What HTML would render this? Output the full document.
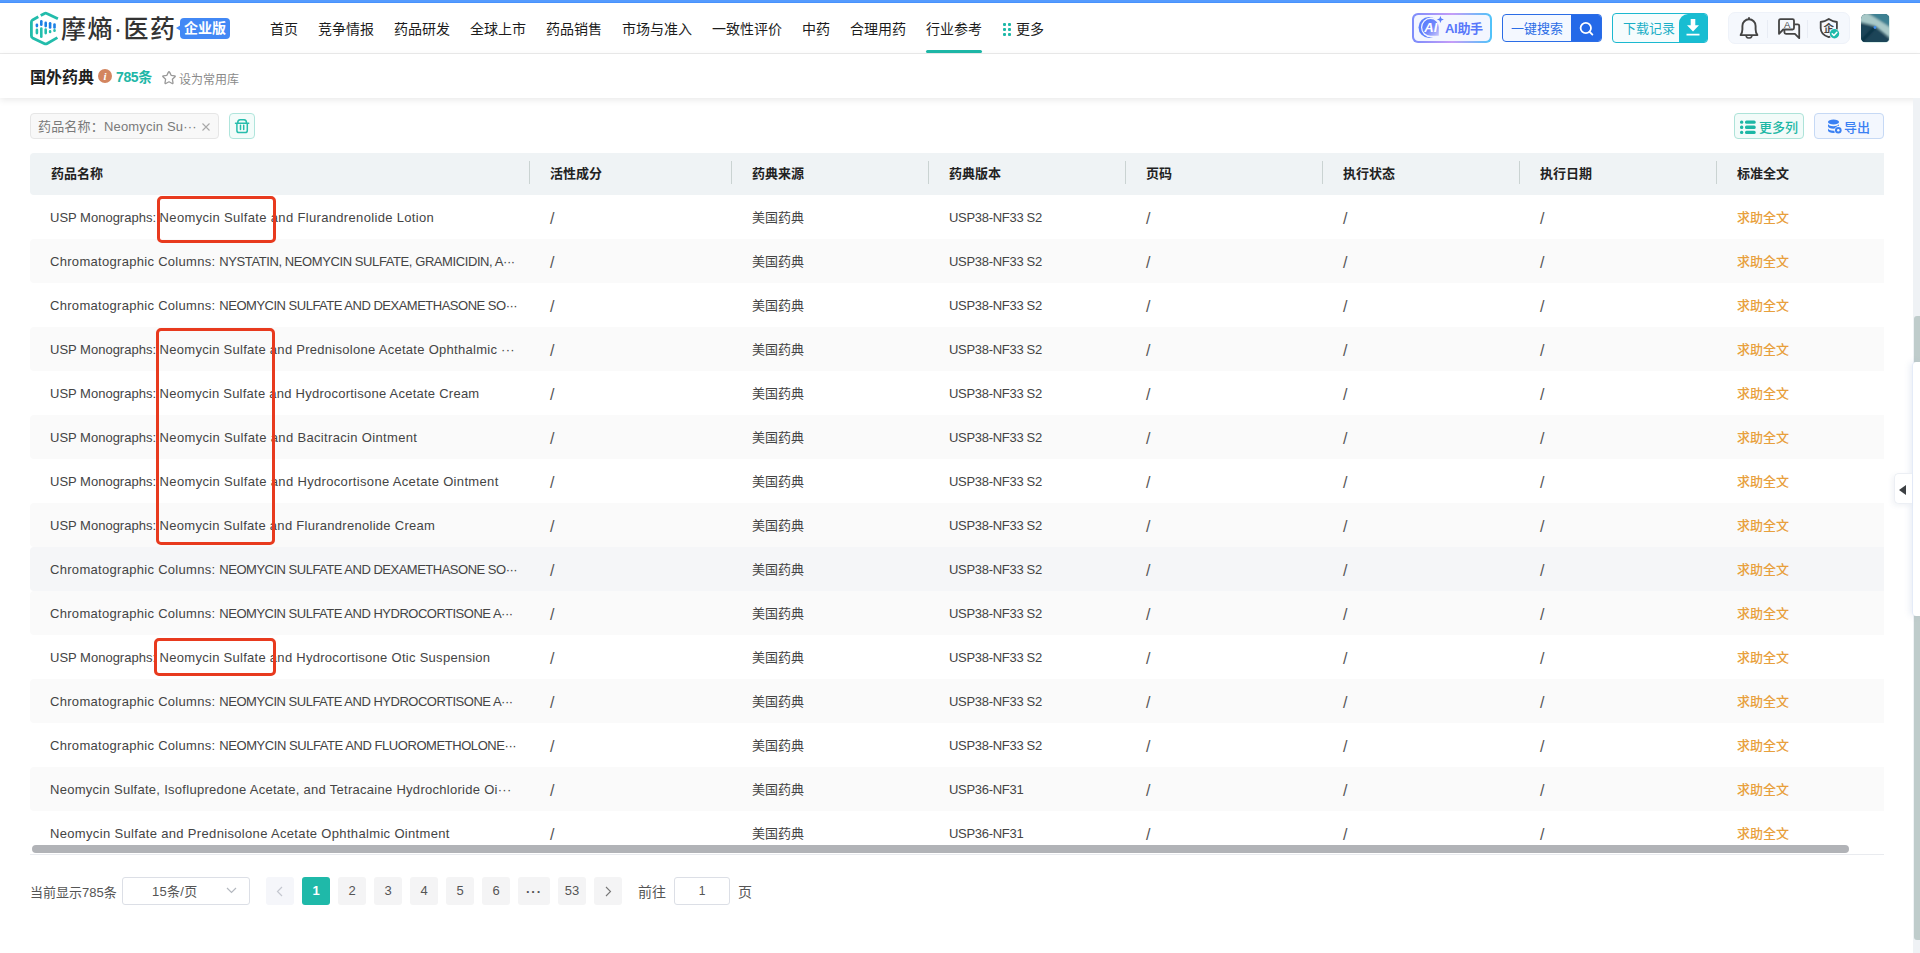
<!DOCTYPE html>
<html lang="zh-CN">
<head>
<meta charset="utf-8">
<title>国外药典 - 摩熵医药</title>
<style>
*{box-sizing:border-box;margin:0;padding:0}
html,body{width:1920px;height:953px;overflow:hidden;background:#fff}
body{position:relative;font-family:"Liberation Sans","Noto Sans CJK SC",sans-serif;font-size:13px;color:#444;-webkit-font-smoothing:antialiased}
.abs{position:absolute}
.topbar{position:absolute;left:0;top:0;width:1920px;height:3px;background:linear-gradient(#559bfe 0,#559bfe 2px,#4892fd 2px)}
/* header */
.hdr{position:absolute;left:0;top:3px;width:1920px;height:51px;background:#fff;border-bottom:1px solid #ececec}
.logo-ic{position:absolute;left:29px;top:8px;width:31px;height:36px}
.logo-tx{position:absolute;left:61px;top:8px;height:36px;line-height:36px;font-size:25px;font-weight:500;color:#333;letter-spacing:1.4px;white-space:nowrap}
.badge{position:absolute;left:180px;top:15px;width:50px;height:21px;border-radius:4px;background:#4288f5;color:#fff;font-size:14px;font-weight:700;line-height:21px;text-align:center}
.badge:before{content:"";position:absolute;left:-4px;top:7px;border:4px solid transparent;border-left:0;border-right:5px solid #4288f5;border-top-width:3.5px;border-bottom-width:3.5px}
.nav{position:absolute;left:260px;top:0;height:51px;display:flex;align-items:center;font-size:14px;color:#1c1c1c;white-space:nowrap}
.nav span{display:block;padding:1px 10px 0;line-height:51px;height:51px;position:relative}
.nav span.on:after{content:"";position:absolute;left:10px;right:10px;bottom:1px;height:3px;border-radius:2px;background:#1eb8a8}
.nav .more{padding-left:24px}
.nav .more i{position:absolute;left:11px;top:20px;width:8px;height:13px}
.nav .more i b{position:absolute;width:3px;height:3px;background:#1eb8a8;border-radius:1px}
/* right tools */
.ai{position:absolute;left:1412px;top:10px;width:80px;height:30px;border-radius:6px;background:linear-gradient(90deg,#7b8cfb,#c59cf7 50%,#4fc3f9);padding:2px}
.ai .in{width:100%;height:100%;border-radius:4.5px;background:#f3f6ff;position:relative}
.ai .t{position:absolute;left:31px;top:1px;line-height:26px;font-size:13px;font-weight:700;color:#5877fa;white-space:nowrap;letter-spacing:-.3px}
.ai svg{position:absolute;left:4px;top:1px}
.sbtn{position:absolute;left:1502px;top:11px;width:100px;height:28px;border:1px solid #2b6de6;border-radius:4px;background:#f4f8ff;overflow:hidden}
.sbtn .t{position:absolute;left:8px;top:0;line-height:27px;font-size:13px;color:#2b6de6;white-space:nowrap}
.sbtn .k{position:absolute;right:0;top:0;width:30px;height:26px;background:#2469e8}
.dbtn{position:absolute;left:1612px;top:10px;width:96px;height:30px;border:1px solid #1bb9d0;border-radius:4px;background:#f5fcfd;overflow:hidden}
.dbtn .t{position:absolute;left:10px;top:0;line-height:29px;font-size:13px;color:#1aaec6;white-space:nowrap}
.dbtn .k{position:absolute;right:0;top:0;width:28px;height:28px;background:#18bdd2;border-top-left-radius:9px}
.grp{position:absolute;left:1728px;top:9px;width:122px;height:32px;border-radius:7px;background:#f5f8fd;border:1px solid #eef2f9}
.grp .dv{position:absolute;top:7px;width:1px;height:18px;background:#e8ecf4}
.avatar{position:absolute;left:1860.500px;top:10.500px;width:29px;height:29px;border-radius:5px;overflow:hidden;background:#dcefeb;padding:.5px}.avatar svg{display:block;border-radius:4px}
/* sub header */
.sub{position:absolute;left:0;top:54px;width:1920px;height:44px;background:#fff;box-shadow:0 2px 7px rgba(0,0,0,.09)}
.sub .ttl{position:absolute;left:30px;top:12px;font-size:16px;font-weight:700;color:#1f1f1f;line-height:24px;white-space:nowrap}
.sub .info{position:absolute;left:98px;top:15px;width:14px;height:14px;border-radius:50%;background:#d3855f;color:#fff;font-size:11px;font-weight:700;font-style:italic;line-height:14px;text-align:center;font-family:"Liberation Serif",serif}
.sub .cnt{position:absolute;left:116px;top:11px;font-size:14px;font-weight:700;color:#20b6a6;line-height:24px;white-space:nowrap;letter-spacing:-.4px}
.sub .fav{position:absolute;left:179px;top:14px;font-size:12px;color:#8a8a8a;line-height:24px;white-space:nowrap}
.sub svg{position:absolute;left:161px;top:16px}
/* filters */
.tag{position:absolute;left:30px;top:113px;width:189px;height:26px;border:1px solid #e6e6e6;border-radius:4px;background:#f8f8f8;color:#7a7a7a;font-size:13px;line-height:25px;padding-left:7px;white-space:nowrap;letter-spacing:.18px}
.tag .x{position:absolute;left:170px;top:8px;width:10px;height:10px}
.trash{position:absolute;left:229px;top:113px;width:26px;height:26px;border:1px solid #b0e5dc;border-radius:4px;background:#f3fcfa}
.btn1{position:absolute;left:1734px;top:113px;width:70px;height:26px;border:1px solid #ade3d9;border-radius:4px;background:#f2fbf9;color:#1cb7a5;font-size:13px;font-weight:500;line-height:25px;white-space:nowrap}
.btn2{position:absolute;left:1814px;top:113px;width:70px;height:26px;border:1px solid #c6d9f5;border-radius:4px;background:#f3f7fe;color:#3a80f3;font-size:13px;font-weight:500;line-height:25px;white-space:nowrap}
.btn1 span,.btn2 span{position:absolute;top:1px}
/* table */
.th{position:absolute;left:30px;top:153px;width:1854px;height:42px;background:#eff3f5;border-radius:4px 0 0 4px;display:flex;font-weight:700;color:#222;font-size:13px;line-height:41px}
.th div{position:relative;padding-left:21px;white-space:nowrap}
.th div+div:before{content:"";position:absolute;left:0;top:8px;width:1px;height:23px;background:#cad3d2}
.tb{position:absolute;left:30px;top:195px;width:1854px;height:650px;overflow:hidden}
.r{display:flex;height:44px;line-height:46px;background:#fff;border-radius:4px 0 0 4px}
.r.alt{background:#fafafa}
.r.hov{background:#f5f6f8}
.c{padding-left:20px;white-space:nowrap;overflow:hidden}
.c1,.h1{width:499px}.c2,.h2{width:202px}.c3,.h3{width:197px}.c4,.h4{width:197px}.c5,.h5{width:197px}.c6,.h6{width:197px}.c7,.h7{width:197px}.c8,.h8{width:168px}
.c2,.c3,.c4,.c5,.c6,.c7,.c8{padding-left:21px}
.m0{letter-spacing:.3px}.m1{letter-spacing:.335px}.m2{letter-spacing:.28px}.m3{letter-spacing:.245px}.u1{letter-spacing:-.41px}.u2{letter-spacing:-.495px}.u3{letter-spacing:-.44px}
.c4{letter-spacing:-.3px}
.c8{color:#e8a03c;font-weight:500}.c2,.c5,.c6,.c7{font-size:16px;color:#555;line-height:48px}
.hsb{position:absolute;left:32px;top:845px;width:1817px;height:8px;border-radius:4px;background:#b1b3b7}
.hln{position:absolute;left:30px;top:854px;width:1854px;height:1px;background:#e9ebef}
/* pager */
.pg{position:absolute;top:878px;height:28px;line-height:28px;font-size:13px;color:#555;white-space:nowrap}
.pb{position:absolute;top:877px;width:28px;height:28px;line-height:28px;border-radius:3px;background:#f4f4f5;color:#555;font-size:13px;text-align:center}
.pb.on{background:#1fb9a9;color:#fff;font-weight:700}
.sel{position:absolute;left:122px;top:877px;width:128px;height:28px;border:1px solid #dcdfe6;border-radius:3px;background:#fff;line-height:27px;font-size:13px;color:#555}
.inp{position:absolute;left:674px;top:877px;width:56px;height:28px;border:1px solid #dcdfe6;border-radius:3px;background:#fff;line-height:26px;font-size:12px;color:#555;text-align:center}
/* right scroll + panel */
.vtrack{position:absolute;left:1913px;top:98px;width:7px;height:855px;background:#eff2f5}
.vthumb{position:absolute;left:1914px;top:316px;width:6px;height:624px;background:#bfcccb;border-radius:3px 0 0 3px}
.panel{position:absolute;left:1912px;top:362px;width:8px;height:254px;background:#fff;border-radius:4px 0 0 4px;box-shadow:-2px 0 6px rgba(120,140,190,.16);border-left:1px solid #e4ebf8}
.tab{position:absolute;left:1894px;top:473px;width:18px;height:31px;background:#fff;border:1px solid #eceff4;border-right:0;border-radius:5px 0 0 5px;box-shadow:-2px 2px 5px rgba(100,120,160,.09)}
.tab:after{content:"";position:absolute;left:4px;top:11px;border:5.5px solid transparent;border-left:0;border-right:7.5px solid #3c4043}
/* annotations */
.red{position:absolute;border:3px solid #e83a1e;border-radius:5px}
</style>
</head>
<body>
<div class="topbar"></div>
<div class="hdr">
  <svg class="logo-ic" viewBox="29 11 31 36" fill="none">
    <g stroke="#22bcab" stroke-width="2.800" stroke-linejoin="round">
      <path d="M40.700 15.500L44.600 13.400Q45.700 12.800 46.800 13.400L57.900 18.800"/>
      <path d="M38.300 16.800L32.600 19.900Q31.400 20.600 31.400 22L31.400 35.800Q31.400 37.200 32.600 37.900L44.600 43.700Q45.700 44.200 46.800 43.700L57.400 37.600"/>
    </g>
    <g stroke="#1a80e6" stroke-width="2.600" stroke-linecap="round">
      <path d="M36.900 24.800v1.300"/><path d="M41.300 21.200v3.600"/><path d="M45.700 22.900v3.200"/><path d="M50.100 23.200v4.300"/><path d="M54.500 24.600v2.900"/>
    </g>
    <g stroke="#23bfae" stroke-width="2.600" stroke-linecap="round">
      <path d="M36.900 29.900v3.200"/><path d="M41.300 28.500v8.200"/><path d="M45.700 29.500v3.600"/><path d="M50.100 31.400v.5" /><path d="M54.500 30.400v.3"/>
    </g>
  </svg>
  <div class="logo-tx">摩熵·医药</div>
  <div class="badge">企业版</div>
  <div class="nav">
    <span>首页</span><span>竞争情报</span><span>药品研发</span><span>全球上市</span><span>药品销售</span><span>市场与准入</span><span>一致性评价</span><span>中药</span><span>合理用药</span><span class="on">行业参考</span><span class="more"><i><b style="left:0;top:0"></b><b style="left:5px;top:0"></b><b style="left:0;top:5px"></b><b style="left:5px;top:5px"></b><b style="left:0;top:10px"></b><b style="left:5px;top:10px"></b></i>更多</span>
  </div>
  <div class="ai"><div class="in">
    <svg width="30" height="24" viewBox="0 0 30 24">
      <defs><linearGradient id="ga" x1="0" y1="0" x2="1" y2="1"><stop offset="0" stop-color="#4f7bff"/><stop offset=".55" stop-color="#7487fb"/><stop offset="1" stop-color="#c9c6fb"/></linearGradient></defs>
      <circle cx="11" cy="11.400" r="10.500" fill="#5d80fc"/><circle cx="12.900" cy="11.400" r="9.900" fill="#f3f6ff"/>
      <path d="M12.500 3.100A8.300 8.300 0 1 0 12.500 19.700L20.800 19.700L20.800 11.400A8.300 8.300 0 0 0 12.500 3.100Z" fill="url(#ga)"/>
      <path d="M22.400 0l1 2.500 2.500 1-2.500 1-1 2.500-1-2.500-2.500-1 2.500-1z" fill="#5b7dfb"/>
      <text x="6.300" y="16" font-family="Liberation Sans, sans-serif" font-size="13" font-weight="700" font-style="italic" fill="#fff">AI</text>
    </svg>
    <div class="t">AI助手</div></div></div>
  <div class="sbtn"><div class="t">一键搜索</div><div class="k">
    <svg width="30" height="26" viewBox="0 0 30 26" fill="none" stroke="#fff" stroke-width="1.8" stroke-linecap="round"><circle cx="14.8" cy="13" r="5.2"/><path d="M18.8 17l2.600 2.600"/></svg></div></div>
  <div class="dbtn"><div class="t">下载记录</div><div class="k">
    <svg width="28" height="28" viewBox="0.5 0 28 28"><path d="M12.2 5h4.6v6.2h3.7L14.5 17.6 8.5 11.2h3.7z" fill="#fff"/><path d="M8 20.6h13" stroke="#fff" stroke-width="1.8"/></svg></div></div>
  <div class="grp">
    <svg class="abs" style="left:8px;top:2px" width="26" height="26" viewBox="1737 15 26 26" fill="none" stroke="#444" stroke-width="1.900" stroke-linecap="round" stroke-linejoin="round"><path d="M1749 17.900v1.300M1740.600 35.100h16.800c-1.300-1.600-1.800-3.400-1.800-5.800v-3.400a6.600 6.600 0 0 0-13.200 0v3.400c0 2.400-.5 4.200-1.800 5.800z"/><path d="M1746.300 36.600c.5.900 1.500 1.400 2.700 1.400s2.200-.5 2.700-1.400" stroke-width="1.700"/></svg>
    <div class="dv" style="left:38px"></div>
    <svg class="abs" style="left:48px;top:3px" width="26" height="26" viewBox="1777 16 26 26" fill="none" stroke="#444" stroke-width="1.800" stroke-linejoin="round"><path d="M1780.500 19.200h12q1.500 0 1.500 1.500v7.300q0 1.500-1.500 1.500h-9.300l-4.200 4.300v-13.100q0-1.500 1.500-1.500z"/><path d="M1794.500 24.300h3.200q1.500 0 1.500 1.500v12.400l-4.300-4.400h-9q-1.500 0-1.500-1.500v-2.600"/><text x="1784" y="27.800" font-family="Liberation Sans, sans-serif" font-size="9.500" stroke="none" fill="#444">A</text></svg>
    <div class="dv" style="left:78px"></div>
    <svg class="abs" style="left:88px;top:2px" width="26" height="26" viewBox="1817 15 26 26" fill="none"><path d="M1828.800 18.900c2.600 1.700 5 2.700 8.100 3.100v6.200c0 4.400-2.900 7.300-8.100 9-5.200-1.700-8.100-4.600-8.100-9V22c3.100-.4 5.500-1.400 8.100-3.100z" stroke="#444" stroke-width="1.800" stroke-linejoin="round"/><text x="1828.8" y="32.2" text-anchor="middle" font-family="Liberation Sans, Noto Sans CJK SC, sans-serif" font-size="10.5" font-weight="700" fill="#444">企</text><circle cx="1834.500" cy="33.700" r="5.200" fill="#f5f8fd"/><circle cx="1834.500" cy="33.700" r="4.700" fill="#1ebbaa"/><path d="M1832.200 33.800l1.700 1.700 3-3.200" stroke="#fff" stroke-width="1.500" stroke-linecap="round" stroke-linejoin="round"/></svg>
  </div>
  <div class="avatar">
    <svg width="28" height="28" viewBox="0 0 28 28"><defs><filter id="bl" x="-20%" y="-20%" width="140%" height="140%"><feGaussianBlur stdDeviation="1.300"/></filter></defs><rect width="28" height="28" fill="#1c4759"/><g filter="url(#bl)"><path d="M6 -2H30V18z" fill="#3c8092"/><path d="M-2 2L5 -2L30 14V25L14 12L-2 8z" fill="#a9c9c8"/><path d="M-2 9L13 13L30 27V30H-2z" fill="#1a4558"/><path d="M14 13L1 27" stroke="#0f3142" stroke-width="3"/></g><circle cx="14" cy="13.500" r="1.400" fill="#3f8df0"/></svg>
  </div>
</div>
<div class="sub">
  <div class="ttl">国外药典</div>
  <div class="info">i</div>
  <div class="cnt">785条</div>
  <svg width="16" height="15" viewBox="0 0 16 15" fill="none" stroke="#999" stroke-width="1.3" stroke-linejoin="round" stroke-linecap="round"><path d="M8 1.6q.4 0 .6.5l1.500 3.200 3.600.5q1 .2.300 1l-2.600 2.500.6 3.600q.1 1-.8.600L8 11.800l-3.200 1.700q-.9.400-.8-.600l.6-3.600L2 6.800q-.7-.8.300-1l3.600-.5 1.500-3.200q.2-.5.600-.5z"/></svg>
  <div class="fav">设为常用库</div>
</div>
<div class="tag">药品名称：Neomycin Su···<svg class="x" width="10" height="10" viewBox="0 0 10 10" stroke="#a8a8a8" stroke-width="1.1"><path d="M1.500 1.500l7 7M8.500 1.500l-7 7"/></svg></div>
<div class="trash"><svg class="abs" style="left:4px;top:4px" width="16" height="16" viewBox="234 118 16 16" fill="none" stroke="#27bdac" stroke-width="1.5" stroke-linecap="round" stroke-linejoin="round"><path d="M237.7 123Q237.700 119.700 240.100 119.700H244.100Q246.500 119.700 246.500 123M235.500 123.200H248.700M236.900 123.600V130.500Q236.900 132.600 239 132.600H245.200Q247.300 132.600 247.300 130.500V123.600M240.500 125.300V129.600M243.700 125.300V129.600"/></svg></div>
<div class="btn1"><svg class="abs" style="left:5px;top:6px" width="16" height="15" viewBox="0 0 16 15" fill="#1cb7a5"><rect x="0" y=".4" width="3.300" height="3.300" rx="1.500"/><rect x="5" y=".4" width="10.700" height="3.300" rx="1.500"/><rect x="0" y="5.600" width="3.300" height="3.300" rx="1.500"/><rect x="5" y="5.600" width="10.700" height="3.300" rx="1.500"/><rect x="0" y="10.800" width="3.300" height="3.300" rx="1.500"/><rect x="5" y="10.800" width="10.700" height="3.300" rx="1.500"/></svg><span style="left:24px">更多列</span></div>
<div class="btn2"><svg class="abs" style="left:12px;top:5px" width="15" height="15" viewBox="0 0 15 15" fill="#3a80f3"><ellipse cx="6.500" cy="3" rx="5.500" ry="2.500"/><path d="M1 4.800c0 1.400 2.500 2.500 5.500 2.500s5.500-1.100 5.500-2.500v2c-2 .2-3.500 1.200-4.200 2.800-.4 0-.8.100-1.300.1C3.500 9.700 1 8.600 1 7.200zM1 9.200c0 1.400 2.500 2.500 5.500 2.500h.9c0 .8.200 1.500.6 2.100-.5.100-1 .1-1.500.1C3.500 13.900 1 12.800 1 11.400z"/><circle cx="11.300" cy="11.200" r="3.300"/><circle cx="11.300" cy="11.200" r="1.200" fill="#f3f7fe"/></svg><span style="left:29px">导出</span></div>
<div class="th"><div class="h1">药品名称</div><div class="h2">活性成分</div><div class="h3">药典来源</div><div class="h4">药典版本</div><div class="h5">页码</div><div class="h6">执行状态</div><div class="h7">执行日期</div><div class="h8">标准全文</div></div>
<div class="tb">
<div class="r"><div class="c c1">USP Monographs: <span class="m1">Neomycin Sulfate and Flurandrenolide Lotion</span></div><div class="c c2">/</div><div class="c c3">美国药典</div><div class="c c4">USP38-NF33 S2</div><div class="c c5">/</div><div class="c c6">/</div><div class="c c7">/</div><div class="c c8">求助全文</div></div>
<div class="r alt"><div class="c c1"><span class="m0">Chromatographic Columns: </span><span class="u1">NYSTATIN, NEOMYCIN SULFATE, GRAMICIDIN, A···</span></div><div class="c c2">/</div><div class="c c3">美国药典</div><div class="c c4">USP38-NF33 S2</div><div class="c c5">/</div><div class="c c6">/</div><div class="c c7">/</div><div class="c c8">求助全文</div></div>
<div class="r"><div class="c c1"><span class="m0">Chromatographic Columns: </span><span class="u2">NEOMYCIN SULFATE AND DEXAMETHASONE SO···</span></div><div class="c c2">/</div><div class="c c3">美国药典</div><div class="c c4">USP38-NF33 S2</div><div class="c c5">/</div><div class="c c6">/</div><div class="c c7">/</div><div class="c c8">求助全文</div></div>
<div class="r alt"><div class="c c1">USP Monographs: <span class="m2">Neomycin Sulfate and Prednisolone Acetate Ophthalmic ···</span></div><div class="c c2">/</div><div class="c c3">美国药典</div><div class="c c4">USP38-NF33 S2</div><div class="c c5">/</div><div class="c c6">/</div><div class="c c7">/</div><div class="c c8">求助全文</div></div>
<div class="r"><div class="c c1">USP Monographs: <span class="m3">Neomycin Sulfate and Hydrocortisone Acetate Cream</span></div><div class="c c2">/</div><div class="c c3">美国药典</div><div class="c c4">USP38-NF33 S2</div><div class="c c5">/</div><div class="c c6">/</div><div class="c c7">/</div><div class="c c8">求助全文</div></div>
<div class="r alt"><div class="c c1">USP Monographs: <span class="m1">Neomycin Sulfate and Bacitracin Ointment</span></div><div class="c c2">/</div><div class="c c3">美国药典</div><div class="c c4">USP38-NF33 S2</div><div class="c c5">/</div><div class="c c6">/</div><div class="c c7">/</div><div class="c c8">求助全文</div></div>
<div class="r"><div class="c c1">USP Monographs: <span class="m1">Neomycin Sulfate and Hydrocortisone Acetate Ointment</span></div><div class="c c2">/</div><div class="c c3">美国药典</div><div class="c c4">USP38-NF33 S2</div><div class="c c5">/</div><div class="c c6">/</div><div class="c c7">/</div><div class="c c8">求助全文</div></div>
<div class="r alt"><div class="c c1">USP Monographs: <span class="m2">Neomycin Sulfate and Flurandrenolide Cream</span></div><div class="c c2">/</div><div class="c c3">美国药典</div><div class="c c4">USP38-NF33 S2</div><div class="c c5">/</div><div class="c c6">/</div><div class="c c7">/</div><div class="c c8">求助全文</div></div>
<div class="r hov"><div class="c c1"><span class="m0">Chromatographic Columns: </span><span class="u2">NEOMYCIN SULFATE AND DEXAMETHASONE SO···</span></div><div class="c c2">/</div><div class="c c3">美国药典</div><div class="c c4">USP38-NF33 S2</div><div class="c c5">/</div><div class="c c6">/</div><div class="c c7">/</div><div class="c c8">求助全文</div></div>
<div class="r alt"><div class="c c1"><span class="m0">Chromatographic Columns: </span><span class="u2">NEOMYCIN SULFATE AND HYDROCORTISONE A···</span></div><div class="c c2">/</div><div class="c c3">美国药典</div><div class="c c4">USP38-NF33 S2</div><div class="c c5">/</div><div class="c c6">/</div><div class="c c7">/</div><div class="c c8">求助全文</div></div>
<div class="r"><div class="c c1">USP Monographs: <span class="m2">Neomycin Sulfate and Hydrocortisone Otic Suspension</span></div><div class="c c2">/</div><div class="c c3">美国药典</div><div class="c c4">USP38-NF33 S2</div><div class="c c5">/</div><div class="c c6">/</div><div class="c c7">/</div><div class="c c8">求助全文</div></div>
<div class="r alt"><div class="c c1"><span class="m0">Chromatographic Columns: </span><span class="u2">NEOMYCIN SULFATE AND HYDROCORTISONE A···</span></div><div class="c c2">/</div><div class="c c3">美国药典</div><div class="c c4">USP38-NF33 S2</div><div class="c c5">/</div><div class="c c6">/</div><div class="c c7">/</div><div class="c c8">求助全文</div></div>
<div class="r"><div class="c c1"><span class="m0">Chromatographic Columns: </span><span class="u3">NEOMYCIN SULFATE AND FLUOROMETHOLONE···</span></div><div class="c c2">/</div><div class="c c3">美国药典</div><div class="c c4">USP38-NF33 S2</div><div class="c c5">/</div><div class="c c6">/</div><div class="c c7">/</div><div class="c c8">求助全文</div></div>
<div class="r alt"><div class="c c1"><span class="m2">Neomycin Sulfate, Isoflupredone Acetate, and Tetracaine Hydrochloride Oi···</span></div><div class="c c2">/</div><div class="c c3">美国药典</div><div class="c c4">USP36-NF31</div><div class="c c5">/</div><div class="c c6">/</div><div class="c c7">/</div><div class="c c8">求助全文</div></div>
<div class="r"><div class="c c1"><span class="m1">Neomycin Sulfate and Prednisolone Acetate Ophthalmic Ointment</span></div><div class="c c2">/</div><div class="c c3">美国药典</div><div class="c c4">USP36-NF31</div><div class="c c5">/</div><div class="c c6">/</div><div class="c c7">/</div><div class="c c8">求助全文</div></div>
</div>
<div class="hsb"></div>
<div class="hln"></div>
<div class="pg" style="left:30px;top:879px">当前显示785条</div>
<div class="sel"><span class="abs" style="left:29px;top:0;letter-spacing:.3px">15条/页</span><svg class="abs" style="left:103px;top:9px" width="11" height="7" viewBox="0 0 11 7" fill="none" stroke="#b4b8bf" stroke-width="1.200"><path d="M1 1l4.500 4.500L10 1"/></svg></div>
<div class="pb" style="left:266px;background:#f5f6fa"><svg class="abs" style="left:10px;top:9px" width="7" height="11" viewBox="0 0 7 11" fill="none" stroke="#c4c7cf" stroke-width="1.200"><path d="M6 1L1.500 5.500 6 10"/></svg></div>
<div class="pb on" style="left:302px">1</div>
<div class="pb" style="left:338px">2</div>
<div class="pb" style="left:374px">3</div>
<div class="pb" style="left:410px">4</div>
<div class="pb" style="left:446px">5</div>
<div class="pb" style="left:482px">6</div>
<div class="pb" style="left:518px;width:32px;font-weight:700;letter-spacing:1px;line-height:29px">···</div>
<div class="pb" style="left:558px">53</div>
<div class="pb" style="left:594px"><svg class="abs" style="left:11px;top:9px" width="7" height="11" viewBox="0 0 7 11" fill="none" stroke="#777" stroke-width="1.100"><path d="M1 1l4.500 4.500L1 10"/></svg></div>
<div class="pg" style="left:638px;font-size:14px">前往</div>
<div class="inp">1</div>
<div class="pg" style="left:738px;font-size:14px">页</div>
<div class="vtrack"></div>
<div class="vthumb"></div>
<div class="panel"></div>
<div class="tab"></div>
<div class="red" style="left:157px;top:196px;width:119px;height:47px"></div>
<div class="red" style="left:156px;top:328px;width:119px;height:217px"></div>
<div class="red" style="left:154px;top:638px;width:122px;height:38px"></div>
</body>
</html>
